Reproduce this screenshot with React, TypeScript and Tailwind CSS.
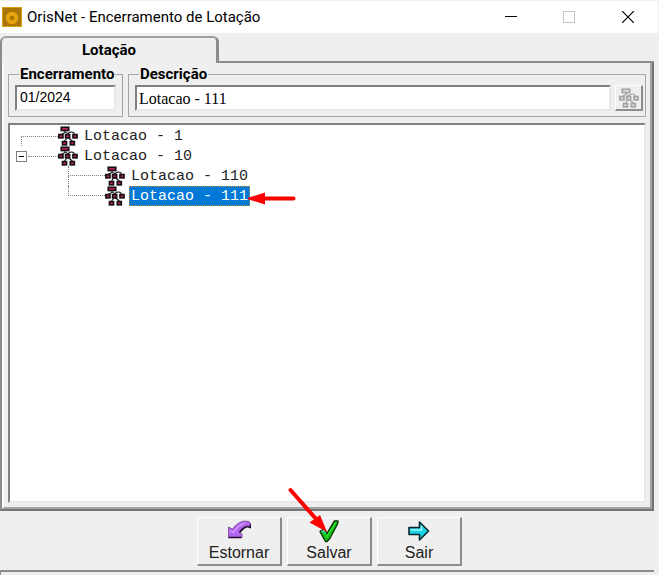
import { useState } from 'react';
import type { ReactNode } from 'react';

interface Lotacao {
    id: string;
    label: string;
    children?: Lotacao[];
}

const lotacoes: Lotacao[] = [
    { id: '1', label: 'Lotacao - 1' },
    {
        id: '10',
        label: 'Lotacao - 10',
        children: [
            { id: '110', label: 'Lotacao - 110' },
            { id: '111', label: 'Lotacao - 111' },
        ],
    },
];

const sunken =
    'border-2 border-t-[#808080] border-l-[#808080] border-r-[#e8e8e8] border-b-[#e8e8e8] bg-white';
const raised =
    'border-t border-l border-r-2 border-b-2 border-t-white border-l-white border-r-[#8c8c8c] border-b-[#8c8c8c] bg-[#efefef]';

function Logo() {
    return (
        <svg className="size-5 shrink-0" viewBox="0 0 20 20" aria-hidden="true">
            <rect x="0.5" y="0.5" width="19" height="19" fill="#a87600" stroke="#dba012" />
            <circle cx="10" cy="11" r="4.2" fill="none" stroke="#e5a50c" strokeWidth="4" />
            <circle cx="10" cy="11" r="2" fill="#a87600" />
        </svg>
    );
}

function OrgIcon({ disabled = false }: { disabled?: boolean }) {
    const line = disabled ? '#a3a3a3' : '#141014';
    const fill = disabled ? '#e6e6e6' : '#d8206c';
    return (
        <svg className="h-5 w-5 shrink-0" viewBox="0 0 20 20" aria-hidden="true">
            <g fill="none" stroke={line} strokeWidth="1.1">
                <path d="M7 5V6.500L3 8.500M7.500 6.500C8 6.500 9.500 7 9.500 8.500M10 8.500C10.500 5.500 16 5 16.500 8.500" />
                <path d="M9 12L6.500 15M10.500 12L14.500 15" />
            </g>
            <g fill={fill} stroke={line} strokeWidth="1.700">
                <rect x="3.300" y="1.300" width="7.400" height="3.200" />
                <rect x="0.900" y="8.600" width="4" height="3.200" />
                <rect x="7.600" y="8.600" width="4" height="3.200" />
                <rect x="15" y="8.600" width="4" height="3.200" />
                <rect x="4.500" y="15.600" width="4" height="3.200" />
                <rect x="12.300" y="15.600" width="4" height="3.200" />
            </g>
        </svg>
    );
}

function UndoArrow() {
    return (
        <svg className="h-6 w-6" viewBox="0 0 24 24" aria-hidden="true">
            <path
                d="M1.500 18.500V8L5.500 10C8 6 12 3 17 2L22 2.500L24 5V8L20 7.500C16.500 8.500 14 10.500 12 13.500L15 15V18.500Z"
                fill="#b266f0"
                stroke="#6d4a88"
                strokeWidth="0.800"
                strokeLinejoin="round"
            />
            <path
                d="M1.500 18.500H14.500M12.500 13.500C14.500 10.500 17 8.500 20 7.500L23.500 8.500V5"
                fill="none"
                stroke="#1f0c30"
                strokeWidth="1.500"
            />
            <path d="M3 12L6.500 13.500C9 9 13 5.500 18 4" fill="none" stroke="#d9a4ff" strokeWidth="1.200" />
        </svg>
    );
}

function CheckMark() {
    return (
        <svg className="h-6 w-6" viewBox="0 0 24 24" aria-hidden="true">
            <path
                d="M3 12.500L6.500 10L10 14.500L17.500 2H21L20.500 5L12.500 20L10 22.500H8.500Z"
                fill="#12c412"
                stroke="#0b3a0b"
                strokeWidth="1.500"
                strokeLinejoin="round"
            />
            <path d="M9.500 18L18.500 3.500" fill="none" stroke="#3fe83f" strokeWidth="1.200" />
            <path d="M4.500 13L6.500 11.500L8.500 14.500" fill="none" stroke="#3fd6b0" strokeWidth="1.500" />
        </svg>
    );
}

function ExitArrow() {
    return (
        <svg className="h-6 w-6" viewBox="0 0 24 24" aria-hidden="true">
            <path
                d="M2 8.500H12.500V3L21.500 12L12.500 21V15.500H2Z"
                fill="#19d3e6"
                stroke="#08262b"
                strokeWidth="1.600"
                strokeLinejoin="round"
            />
            <path d="M3.500 11H14.500V7" fill="none" stroke="#a8f6ff" strokeWidth="1.500" />
        </svg>
    );
}

function TreeLabel({ item, selected, onSelect }: { item: Lotacao; selected: boolean; onSelect: () => void }) {
    return (
        <span className="relative ml-1">
            <button
                type="button"
                onClick={onSelect}
                className={
                    selected
                        ? 'block h-5 border border-dotted border-[#d08a3c] bg-[#0078d7] px-px pt-0.5 text-white'
                        : 'block h-5 border border-transparent px-px pt-0.5 text-[#222]'
                }
            >
                {item.label}
            </button>
            {selected && (
                <svg
                    className="pointer-events-none absolute top-0 right-[-46px] h-5 w-12"
                    viewBox="0 0 48 20"
                    aria-hidden="true"
                >
                    <path d="M16 12.500H45.500" stroke="#f00" strokeWidth="4" strokeLinecap="round" />
                    <path d="M-2 12.500L17 6.500V18.500Z" fill="#f00" />
                </svg>
            )}
        </span>
    );
}

function ToolButton({ label, children }: { label: string; children: ReactNode }) {
    return (
        <button
            type="button"
            className={`${raised} relative flex h-[49px] min-w-[85px] flex-col items-center px-2.5 pt-px text-base leading-5 text-[#222]`}
        >
            {children}
            {label}
        </button>
    );
}

export default function App() {
    const [selected, setSelected] = useState('111');
    const [open, setOpen] = useState(true);
    const [periodo, setPeriodo] = useState('01/2024');
    const [descricao, setDescricao] = useState('Lotacao - 111');

    const groupClasses = 'border border-[#a6a6a6] px-1.5 pt-0.5 pb-[5px]';
    const legendClasses = "ml-1 px-px font-['Roboto'] text-[15px] leading-[18px] font-bold";

    return (
        <div className="flex min-h-screen flex-col bg-[#efefef] pt-px font-['Liberation_Sans',sans-serif] text-black">
            <header className="mr-px flex h-8 items-center bg-white pl-0.5">
                <Logo />
                <h1 className="ml-[5px] flex-1 font-['Roboto',sans-serif] text-[15px]">
                    OrisNet - Encerramento de Lotação
                </h1>
                <div className="flex">
                    <button type="button" aria-label="Minimizar" className="flex h-8 w-[58px] items-center justify-center">
                        <svg className="size-3" viewBox="0 0 12 12">
                            <path d="M0 5.500H12" stroke="#000" />
                        </svg>
                    </button>
                    <button type="button" aria-label="Maximizar" disabled className="flex h-8 w-[58px] items-center justify-center">
                        <svg className="size-3" viewBox="0 0 12 12">
                            <rect x="0.500" y="0.500" width="11" height="11" fill="none" stroke="#c4c4c4" />
                        </svg>
                    </button>
                    <button type="button" aria-label="Fechar" className="flex h-8 w-[60px] items-center justify-center">
                        <svg className="size-3" viewBox="0 0 12 12">
                            <path d="M0 0L12 12M12 0L0 12" stroke="#000" strokeWidth="1.200" />
                        </svg>
                    </button>
                </div>
            </header>

            <main className="mr-[5px] flex flex-1 flex-col pt-[3px]">
                <div className="flex" role="tablist">
                    <button
                        type="button"
                        role="tab"
                        aria-selected="true"
                        className="h-[27px] w-[219px] rounded-tl-md rounded-tr-md border-t-2 border-r-[3px] border-l-2 border-t-[#a0a0a0] border-r-[#8c8c8c] border-l-[#8c8c8c] font-['Roboto'] text-[15px] font-bold"
                    >
                        Lotação
                    </button>
                    <div className="flex-1 border-b-2 border-[#8c8c8c]" />
                </div>

                <div className="flex flex-1 flex-col border-r-2 border-b-2 border-l-2 border-r-[#757575] border-b-[#757575] border-l-[#8c8c8c]">
                    <div className="flex flex-1 flex-col border-r-2 border-b-2 border-l-2 border-r-[#a3a3a3] border-b-[#a3a3a3] border-l-white px-1 pt-0.5 pb-1">
                        <div className="flex gap-[5px]">
                            <fieldset className={groupClasses}>
                                <legend className={legendClasses}>
                                    <label htmlFor="periodo">Encerramento</label>
                                </legend>
                                <input
                                    id="periodo"
                                    value={periodo}
                                    onChange={(e) => setPeriodo(e.target.value)}
                                    className={`${sunken} block h-[26px] w-[101px] px-[3px] pb-0.5 text-sm outline-none`}
                                />
                            </fieldset>
                            <fieldset className={`${groupClasses} min-w-0 flex-1`}>
                                <legend className={legendClasses}>
                                    <label htmlFor="descricao">Descrição</label>
                                </legend>
                                <div className="flex gap-1">
                                    <input
                                        id="descricao"
                                        value={descricao}
                                        onChange={(e) => setDescricao(e.target.value)}
                                        className={`${sunken} block h-[26px] min-w-0 flex-1 px-0.5 pt-0.5 font-['Liberation_Serif',serif] text-base outline-none`}
                                    />
                                    <button
                                        type="button"
                                        disabled
                                        aria-label="Buscar lotação"
                                        className={`${raised} -mr-1 flex h-[26px] w-7 items-center justify-center`}
                                    >
                                        <OrgIcon disabled />
                                    </button>
                                </div>
                            </fieldset>
                        </div>

                        <div className={`${sunken} mt-1.5 flex-1 pt-px pl-1.5`}>
                            <ul role="tree" className="font-['Liberation_Mono',monospace] text-[15px] leading-4">
                                {lotacoes.map((item) => (
                                    <li key={item.id} role="treeitem" aria-selected={selected === item.id}>
                                        <div className="flex h-5 items-center">
                                            {item.children ? (
                                                <>
                                                    <button
                                                        type="button"
                                                        aria-label="Expandir"
                                                        onClick={() => setOpen(!open)}
                                                        className="flex size-[11px] items-center justify-center border border-[#808080] bg-white"
                                                    >
                                                        <span className="h-px w-[5px] bg-black" />
                                                    </button>
                                                    <span className="ml-px w-[30px] border-t border-dotted border-[#808080]" />
                                                </>
                                            ) : (
                                                <span className="ml-[5px] h-2.5 w-[37px] self-end border-t border-l border-dotted border-[#808080]" />
                                            )}
                                            <OrgIcon />
                                            <TreeLabel
                                                item={item}
                                                selected={selected === item.id}
                                                onSelect={() => setSelected(item.id)}
                                            />
                                        </div>
                                        {item.children && open && (
                                            <ul role="group" className="ml-[52px]">
                                                {item.children.map((child, i) => (
                                                    <li
                                                        key={child.id}
                                                        role="treeitem"
                                                        aria-selected={selected === child.id}
                                                        className="flex h-5"
                                                    >
                                                        <span className="w-[37px]">
                                                            <span className="block h-2.5 border-b border-l border-dotted border-[#808080]" />
                                                            {i < item.children!.length - 1 && (
                                                                <span className="block h-2.5 border-l border-dotted border-[#808080]" />
                                                            )}
                                                        </span>
                                                        <OrgIcon />
                                                        <TreeLabel
                                                            item={child}
                                                            selected={selected === child.id}
                                                            onSelect={() => setSelected(child.id)}
                                                        />
                                                    </li>
                                                ))}
                                            </ul>
                                        )}
                                    </li>
                                ))}
                            </ul>
                        </div>
                    </div>
                </div>
            </main>

            <div className="flex justify-center gap-[5px] pt-1.5 pb-1">
                <ToolButton label="Estornar">
                    <UndoArrow />
                </ToolButton>
                <ToolButton label="Salvar">
                    <CheckMark />
                    <svg
                        className="pointer-events-none absolute -top-8 left-0 h-12 w-12"
                        viewBox="0 0 48 48"
                        aria-hidden="true"
                    >
                        <path d="M2.500 4L29 34" stroke="#f00" strokeWidth="4" strokeLinecap="round" />
                        <path d="M39 46L21.500 36.500L32 29Z" fill="#f00" />
                    </svg>
                </ToolButton>
                <ToolButton label="Sair">
                    <ExitArrow />
                </ToolButton>
            </div>
            <footer className="mr-[5px] h-[5px] border-t-2 border-l border-[#8c8c8c]" />
        </div>
    );
}
